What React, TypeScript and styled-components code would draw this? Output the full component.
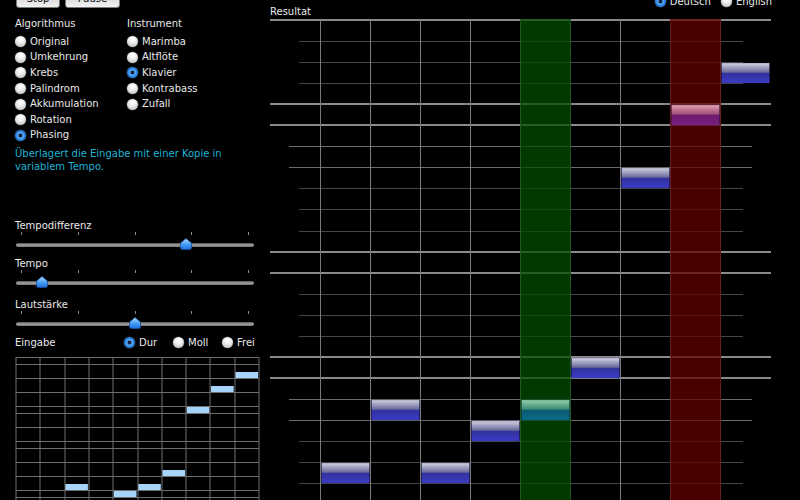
import React from "react";
import styled, { createGlobalStyle } from "styled-components";

const GlobalStyle = createGlobalStyle`
  html, body {
    margin: 0;
    padding: 0;
    background: #000;
    overflow: hidden;
  }
  body {
    font-family: "DejaVu Sans", "Liberation Sans", sans-serif;
    font-size: 10px;
    color: #e8e8e8;
  }
`;

const algorithms = ["Original", "Umkehrung", "Krebs", "Palindrom", "Akkumulation", "Rotation", "Phasing"];
const instruments = ["Marimba", "Altflöte", "Klavier", "Kontrabass", "Zufall"];

const sliders = [
  { label: "Tempodifferenz", value: 0.726, gap: 46 },
  { label: "Tempo", value: 0.093, gap: 8 },
  { label: "Lautstärke", value: 0.502, gap: 11 },
];

// result staff: row kind for each of the 23 lines
const lineKinds = [
  "thick", "thin", "thin", "thin", "thick", "thick", "mid", "mid", "thin", "thin", "thin", "thick",
  "thick", "thin", "thin", "thin", "thick", "thick", "mid", "mid", "thin", "thin", "thin",
];
const lineStyle: Record<string, { x1: number; x2: number; stroke: string; w: number }> = {
  thick: { x1: 270, x2: 771, stroke: "#8a8a8a", w: 2 },
  mid: { x1: 289, x2: 752, stroke: "#6c6c6c", w: 1 },
  thin: { x1: 299, x2: 743, stroke: "#474747", w: 1 },
};
const rowY = (k: number) => Math.round(20 + 21.05 * k);

const resultNotes = [
  { col: 0, row: 21, fill: "blue" },
  { col: 1, row: 18, fill: "blue" },
  { col: 2, row: 21, fill: "blue" },
  { col: 3, row: 19, fill: "blue" },
  { col: 4, row: 18, fill: "teal" },
  { col: 5, row: 16, fill: "blue" },
  { col: 6, row: 7, fill: "blue" },
  { col: 7, row: 4, fill: "pink" },
  { col: 8, row: 2, fill: "blue" },
];

// input piano roll: lines sit on scale steps, rows are 7px semitones
const inputLines = [0, 1, 3, 5, 7, 8, 10, 12, 13, 15, 17, 19, 20];
const inputNotes = [
  { col: 2, row: 18 },
  { col: 4, row: 19 },
  { col: 5, row: 18 },
  { col: 6, row: 16 },
  { col: 7, row: 7 },
  { col: 8, row: 4 },
  { col: 9, row: 2 },
];

const Page = styled.div`
  display: grid;
  grid-template-columns: 262px 538px;
  width: 800px;
  height: 512px;
  margin-top: -12px;
  overflow: hidden;
`;

const LeftPanel = styled.div`
  display: flex;
  flex-direction: column;
  padding-left: 15px;
`;

const ButtonRow = styled.div`
  display: flex;
  gap: 5px;
  height: 20px;
  padding-left: 1px;
`;

const AquaButton = styled.button<{ $w: number }>`
  width: ${(p) => p.$w}px;
  height: 20px;
  padding: 0;
  border: 1px solid #7a7a7a;
  border-radius: 3px;
  background: linear-gradient(#ffffff, #eeeeee 48%, #dcdcdc 52%, #f2f2f2);
  font-family: "DejaVu Sans", sans-serif;
  font-size: 10px;
  color: #111;
`;

const ChoiceColumns = styled.div`
  display: grid;
  grid-template-columns: 112px 1fr;
  margin-top: 10px;
`;

const Group = styled.div`
  display: flex;
  flex-direction: column;
`;

const GroupTitle = styled.div`
  height: 12px;
  line-height: 12px;
  margin-bottom: 4px;
`;

const RadioRow = styled.label<{ $w?: number }>`
  display: flex;
  align-items: center;
  gap: 4px;
  height: 15.6px;
  line-height: 12px;
  width: ${(p) => (p.$w ? `${p.$w}px` : "auto")};
  white-space: nowrap;
`;

const RadioDot = styled.span<{ $on?: boolean }>`
  flex: none;
  width: 11px;
  height: 11px;
  border-radius: 50%;
  box-shadow: 0 0 0 0.5px #444;
  background: ${(p) =>
    p.$on
      ? "radial-gradient(circle at 50% 50%, #0c2550 0, #0c2550 1.6px, #7cc6ff 2.6px, #2f8cec 3.6px, #1560cc 100%)"
      : "radial-gradient(circle at 50% 30%, #ffffff 0, #f2f2f2 35%, #cacaca 75%, #9c9c9c 100%)"};
`;

const Description = styled.div`
  margin-top: 5px;
  max-width: 225px;
  line-height: 12.7px;
  color: #20b2d6;
`;

const SliderBlock = styled.div<{ $gap: number }>`
  margin-top: ${(p) => p.$gap}px;
`;

const SliderLabel = styled.div`
  height: 12px;
  line-height: 12px;
`;

const SliderBox = styled.div`
  position: relative;
  width: 238px;
  height: 18px;
  margin-left: 1px;
`;

const Ticks = styled.div`
  display: flex;
  justify-content: space-between;
  padding: 0 5px 0 5px;
  height: 4px;
`;

const Tick = styled.span`
  width: 1px;
  height: 3px;
  background: #8a8a8a;
`;

const Track = styled.div`
  height: 4px;
  margin-top: 7px;
  border-radius: 2px;
  background: linear-gradient(#4e4e4e, #a4a4a4 50%, #707070);
`;

const Thumb = styled.svg<{ $pos: number }>`
  position: absolute;
  top: 6px;
  left: ${(p) => 4.7 + p.$pos * 227.6 - 6}px;
`;

const InputHeader = styled.div`
  display: flex;
  align-items: center;
  height: 14px;
  margin-top: 7px;
`;

const InputTitle = styled.div`
  width: 109px;
`;

const InputRoll = styled.svg`
  display: block;
  margin-top: 7px;
  margin-left: -0.5px;
`;

const RightPanel = styled.div`
  display: flex;
  flex-direction: column;
`;

const LangRow = styled.div`
  display: flex;
  justify-content: flex-end;
  gap: 10px;
  height: 12px;
  padding-top: 6px;
  padding-bottom: 2px;
  padding-right: 28px;
`;

const ResultTitle = styled.div`
  height: 12px;
  line-height: 12px;
  margin-top: -2px;
  padding-left: 8px;
`;

const ResultStaff = styled.svg`
  display: block;
`;

const Radio: React.FC<{ label: string; on?: boolean; w?: number }> = ({ label, on, w }) => (
  <RadioRow $w={w}>
    <RadioDot $on={on} />
    {label}
  </RadioRow>
);

const SliderThumb: React.FC<{ pos: number }> = ({ pos }) => {
  const id = `thumb${Math.round(pos * 100)}`;
  return (
    <Thumb $pos={pos} width="12" height="12" viewBox="0 0 12 12">
      <defs>
        <linearGradient id={id} x1="0" y1="0" x2="0" y2="1">
          <stop offset="0" stopColor="#b6e0ff" />
          <stop offset="0.5" stopColor="#4aa2f4" />
          <stop offset="1" stopColor="#1d6ee0" />
        </linearGradient>
      </defs>
      <path
        d="M6 0.5 L11.5 5 L11.5 9.5 Q11.5 11.5 9.5 11.5 L2.5 11.5 Q0.5 11.5 0.5 9.5 L0.5 5 Z"
        fill={`url(#${id})`}
        stroke="#1f4f9a"
        strokeWidth="0.8"
      />
    </Thumb>
  );
};

const Slider: React.FC<{ label: string; value: number; gap: number }> = ({ label, value, gap }) => (
  <SliderBlock $gap={gap}>
    <SliderLabel>{label}</SliderLabel>
    <SliderBox>
      <Ticks>
        {[0, 1, 2, 3, 4].map((i) => (
          <Tick key={i} />
        ))}
      </Ticks>
      <Track />
      <SliderThumb pos={value} />
    </SliderBox>
  </SliderBlock>
);

const InputGrid: React.FC = () => {
  const colX = (c: number) => 15 + 24.3 * c;
  return (
    <InputRoll width="245" height="150" viewBox="14.5 356 245 150">
      {inputNotes.map((n) => (
        <rect
          key={n.col}
          x={colX(n.col) + 1}
          y={357 + 7 * n.row}
          width={22.8}
          height={6.2}
          fill="#a6d4fb"
        />
      ))}
      {inputLines.map((r) => (
        <line key={r} x1={15} x2={258.5} y1={356.5 + 7 * r} y2={356.5 + 7 * r} stroke="#6e6e6e" strokeWidth="1" />
      ))}
      {Array.from({ length: 11 }, (_, c) => (
        <line
          key={c}
          x1={Math.round(colX(c)) + 0.5}
          x2={Math.round(colX(c)) + 0.5}
          y1={356.5}
          y2={510}
          stroke="#6e6e6e"
          strokeWidth="1"
        />
      ))}
    </InputRoll>
  );
};

const ResultGrid: React.FC = () => (
  <ResultStaff width="538" height="482" viewBox="262 18 538 482">
    <defs>
      <linearGradient id="note-blue" x1="0" y1="0" x2="0" y2="1">
        <stop offset="0" stopColor="#d2d2e2" />
        <stop offset="0.46" stopColor="#6a6a9c" />
        <stop offset="0.52" stopColor="#32329e" />
        <stop offset="1" stopColor="#3c3cc6" />
      </linearGradient>
      <linearGradient id="note-pink" x1="0" y1="0" x2="0" y2="1">
        <stop offset="0" stopColor="#e6a2b0" />
        <stop offset="0.46" stopColor="#a04a78" />
        <stop offset="0.52" stopColor="#6c1a6c" />
        <stop offset="1" stopColor="#7c2080" />
      </linearGradient>
      <linearGradient id="note-teal" x1="0" y1="0" x2="0" y2="1">
        <stop offset="0" stopColor="#92d2aa" />
        <stop offset="0.46" stopColor="#3a8a74" />
        <stop offset="0.52" stopColor="#0a5a70" />
        <stop offset="1" stopColor="#0a6c8a" />
      </linearGradient>
    </defs>
    {lineKinds.map((kind, k) => {
      const s = lineStyle[kind];
      const y = s.w === 2 ? rowY(k) : rowY(k) + 0.5;
      return <line key={k} x1={s.x1} x2={s.x2} y1={y} y2={y} stroke={s.stroke} strokeWidth={s.w} />;
    })}
    {Array.from({ length: 9 }, (_, i) => (
      <line key={i} x1={320.5 + 50 * i} x2={320.5 + 50 * i} y1={20} y2={500} stroke="#7a7a7a" strokeWidth="1" />
    ))}
    <rect x={520} y={19} width={51} height={481} fill="rgba(0, 78, 0, 0.74)" />
    <rect x={670} y={19} width={51} height={481} fill="rgba(100, 0, 0, 0.74)" />
    {resultNotes.map((n) => (
      <rect
        key={n.col}
        x={321.5 + 50 * n.col}
        y={rowY(n.row) + 1}
        width={48}
        height={rowY(n.row + 1) - rowY(n.row) - 1}
        fill={`url(#note-${n.fill})`}
        stroke="rgba(40, 40, 120, 0.6)"
        strokeWidth="0.5"
      />
    ))}
  </ResultStaff>
);

export default function App() {
  return (
    <>
      <GlobalStyle />
      <Page>
        <LeftPanel>
          <ButtonRow>
            <AquaButton $w={44}>Stop</AquaButton>
            <AquaButton $w={55}>Pause</AquaButton>
          </ButtonRow>
          <ChoiceColumns>
            <Group>
              <GroupTitle>Algorithmus</GroupTitle>
              {algorithms.map((a) => (
                <Radio key={a} label={a} on={a === "Phasing"} />
              ))}
            </Group>
            <Group>
              <GroupTitle>Instrument</GroupTitle>
              {instruments.map((a) => (
                <Radio key={a} label={a} on={a === "Klavier"} />
              ))}
            </Group>
          </ChoiceColumns>
          <Description>Überlagert die Eingabe mit einer Kopie in variablem Tempo.</Description>
          {sliders.map((s) => (
            <Slider key={s.label} label={s.label} value={s.value} gap={s.gap} />
          ))}
          <InputHeader>
            <InputTitle>Eingabe</InputTitle>
            <Radio label="Dur" on w={49} />
            <Radio label="Moll" w={49} />
            <Radio label="Frei" w={40} />
          </InputHeader>
          <InputGrid />
        </LeftPanel>
        <RightPanel>
          <LangRow>
            <Radio label="Deutsch" on />
            <Radio label="English" />
          </LangRow>
          <ResultTitle>Resultat</ResultTitle>
          <ResultGrid />
        </RightPanel>
      </Page>
    </>
  );
}
